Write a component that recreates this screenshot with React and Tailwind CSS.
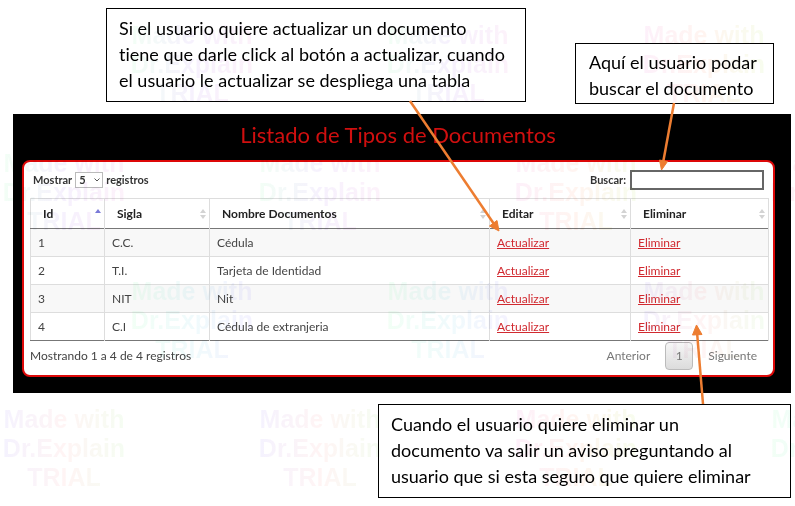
import React from "react";

const documents = [
  { id: 1, sigla: "C.C.", nombre: "Cédula" },
  { id: 2, sigla: "T.I.", nombre: "Tarjeta de Identidad" },
  { id: 3, sigla: "NIT", nombre: "Nit" },
  { id: 4, sigla: "C.I", nombre: "Cédula de extranjeria" },
];

const columns = ["Id", "Sigla", "Nombre Documentos", "Editar", "Eliminar"];

const tints = [
  "from-[#f0fff4] via-[#f5effd] to-[#fdf0fa]",
  "from-[#fdeefa] via-[#fff3ee] to-[#f6fdeb]",
  "from-[#f0fff4] via-[#eefafc] to-[#f3f0ff]",
  "from-[#f3f0ff] via-[#fff3f3] to-[#f3fdf0]",
];

const stampRows = [
  [0, 0, 1],
  [0, 0, 1, 1],
  [2, 2, 3],
  [3, 3, 1, 2],
];

function Stamp({ tint }) {
  return (
    <div
      className={
        "w-32 shrink-0 bg-gradient-to-r bg-clip-text pt-[21px] text-center text-[25px] leading-[29px] font-bold whitespace-nowrap text-transparent " +
        tint
      }
    >
      Made with
      <br />
      Dr.Explain
      <br />
      TRIAL
    </div>
  );
}

function Watermark() {
  return (
    <div
      aria-hidden="true"
      className="pointer-events-none absolute inset-0 overflow-hidden font-['Liberation_Sans',sans-serif] opacity-85 mix-blend-multiply"
    >
      {stampRows.map((stamps, row) => (
        <div
          key={row}
          className={"flex h-32 gap-32 " + (row % 2 === 0 ? "pl-32" : "")}
        >
          {stamps.map((tint, col) => (
            <Stamp key={col} tint={tints[tint]} />
          ))}
        </div>
      ))}
    </div>
  );
}

function Callout({ className, children }) {
  return (
    <p
      className={
        "border border-black bg-white font-['Lato',sans-serif] text-lg leading-[26px] text-black [font-variant-ligatures:none] " +
        className
      }
    >
      {children}
    </p>
  );
}

function SortIcon({ active }) {
  return (
    <svg viewBox="0 0 6 12" className="h-3 w-[6px] shrink-0" aria-hidden="true">
      <path d="M3 1 L6 5 H0 Z" fill={active ? "#7a7ad8" : "#d3d3d3"} />
      {!active && <path d="M3 11 L6 7 H0 Z" fill="#d3d3d3" />}
    </svg>
  );
}

function DocumentsPanel() {
  return (
    <section className="bg-black px-[9px] pb-4 font-['Lato',sans-serif] text-xs text-[#444] [font-variant-ligatures:none]">
      <h1 className="h-[46px] pt-[6px] pr-5 pl-3 text-center text-[22px] leading-[30px] text-[#d00f0f]">
        Listado de Tipos de Documentos
      </h1>
      <div className="mr-[7px] rounded-lg border-2 border-[#dd0808] bg-white pr-1 pl-[6px]">
        <div className="flex h-9 items-center justify-between pr-[5px] pl-[3px] text-[11px] font-bold text-[#333]">
          <div className="flex items-center gap-[3px]">
            <label htmlFor="page-size">Mostrar</label>
            <div className="relative">
              <select
                id="page-size"
                defaultValue="5"
                className="block h-4 w-7 appearance-none border border-[#bbb] bg-white pl-[3px] text-[11px] leading-3"
              >
                <option>5</option>
                <option>10</option>
              </select>
              <svg
                viewBox="0 0 6 4"
                className="pointer-events-none absolute top-[6px] right-[3px] h-1 w-[6px]"
                fill="none"
                stroke="#555"
                aria-hidden="true"
              >
                <path d="M0.5 0.5 L3 3 L5.5 0.5" />
              </svg>
            </div>
            <label htmlFor="page-size">registros</label>
          </div>
          <div className="flex items-center gap-1">
            <label htmlFor="search">Buscar:</label>
            <input
              id="search"
              type="text"
              className="h-5 w-[134px] border-2 border-[#666] bg-white px-1 outline-none"
            />
          </div>
        </div>

        <table className="w-full table-fixed border-collapse border border-[#ddd] border-b-[#777] text-left">
          <colgroup>
            <col className="w-[74px]" />
            <col className="w-[105px]" />
            <col />
            <col className="w-[141px]" />
            <col className="w-[138px]" />
          </colgroup>
          <thead>
            <tr className="h-[30px] border-b border-[#777] text-[#222]">
              {columns.map((name, i) => (
                <th
                  key={name}
                  className="border-r border-r-[#ddd] p-0 pr-[3px] pl-3 font-bold"
                >
                  <div className="flex items-center justify-between">
                    {name}
                    <SortIcon active={i === 0} />
                  </div>
                </th>
              ))}
            </tr>
          </thead>
          <tbody>
            {documents.map((doc) => (
              <tr
                key={doc.id}
                className="h-7 border-t border-[#ddd] odd:bg-[#f8f8f8] first:border-t-[#777] [&>td]:border-r [&>td]:border-r-[#ddd] [&>td]:p-0 [&>td]:pl-[7px]"
              >
                <td>{doc.id}</td>
                <td>{doc.sigla}</td>
                <td>{doc.nombre}</td>
                <td>
                  <a href="#actualizar" className="text-[#d12a30] underline">
                    Actualizar
                  </a>
                </td>
                <td>
                  <a href="#eliminar" className="text-[#d12a30] underline">
                    Eliminar
                  </a>
                </td>
              </tr>
            ))}
          </tbody>
        </table>

        <div className="flex h-[34px] items-center justify-between pb-1">
          <p>Mostrando 1 a 4 de 4 registros</p>
          <nav className="flex items-center gap-[15px] pr-3 text-[#777]">
            <button type="button">Anterior</button>
            <button
              type="button"
              className="h-7 w-7 rounded-sm border border-[#bbb] bg-gradient-to-b from-[#f6f6f6] to-[#dcdcdc]"
            >
              1
            </button>
            <button type="button">Siguiente</button>
          </nav>
        </div>
      </div>
    </section>
  );
}

function Arrows() {
  return (
    <svg
      className="pointer-events-none absolute top-0 left-0 h-[506px] w-[795px]"
      viewBox="0 0 795 506"
      fill="#ed7d31"
      stroke="#ed7d31"
      aria-hidden="true"
    >
      <path d="M410 101 L494 224" strokeWidth="2.5" />
      <path d="M499 231 L489.500 226 L497 220.500 Z" strokeWidth="1" />
      <path d="M674 103 L663 163" strokeWidth="2.5" />
      <path d="M661.500 170 L659.500 160 L667.500 161.500 Z" strokeWidth="1" />
      <path d="M703 404 L697 332" strokeWidth="2.5" />
      <path d="M696.500 325 L692.500 335 L702 334.500 Z" strokeWidth="1" />
    </svg>
  );
}

export default function App() {
  return (
    <main className="relative min-h-screen overflow-hidden bg-white pr-1 pb-2 pl-[13px]">
      <div className="flex h-[114px] items-start justify-between pt-2 pr-[17px] pl-[93px]">
        <Callout className="h-[94px] w-[420px] pt-[6px] pl-3">
          Si el usuario quiere actualizar un documento
          <br />
          tiene que darle click al botón a actualizar, cuando
          <br />
          el usuario le actualizar se despliega una tabla
        </Callout>
        <Callout className="mt-[35px] h-[61px] w-[199px] pt-[5px] pl-[13px]">
          Aquí el usuario podar
          <br />
          buscar el documento
        </Callout>
      </div>
      <DocumentsPanel />
      <Callout className="mt-[11px] ml-auto h-[94px] w-[413px] pt-[6px] pl-3">
        Cuando el usuario quiere eliminar un
        <br />
        documento va salir un aviso preguntando al
        <br />
        usuario que si esta seguro que quiere eliminar
      </Callout>
      <Watermark />
      <Arrows />
    </main>
  );
}
